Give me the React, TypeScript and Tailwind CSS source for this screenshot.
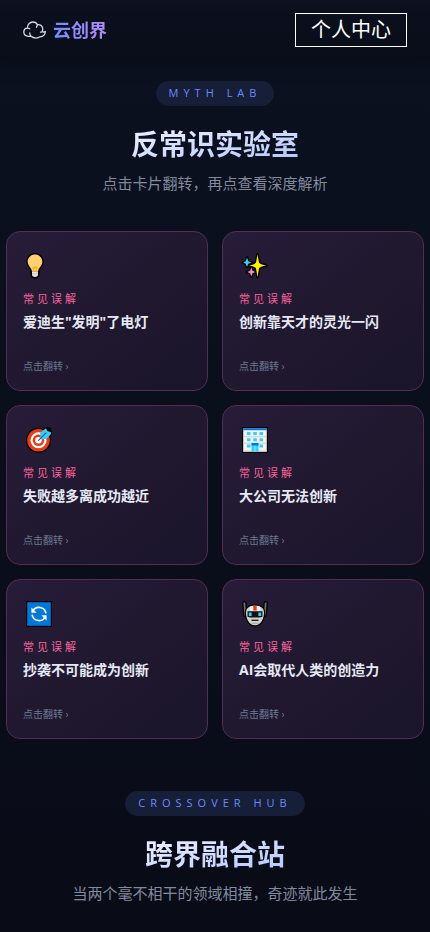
import React, { useState } from 'react'

const BulbIcon = () => (
  <svg viewBox="0 0 26 26" className="size-[26px]" aria-hidden="true">
    <path d="M9 0C4.300 0 .3 3.700.3 8.700c0 3.200 1.800 5 3.200 7.300.9 1.500.7 3 .9 5.300.2 2.900 1.800 4.400 4.600 4.400s4.400-1.500 4.600-4.400c.2-2.300 0-3.800.9-5.300 1.400-2.300 3.200-4.100 3.200-7.300C17.700 3.700 13.700 0 9 0Z" fill="#000" />
    <path d="M9 1.400C4.800 1.400 1.600 4.700 1.600 8.700c0 3.100 2.200 4.700 3.500 7.100.4.800.7 1.600.8 2.700h6.200c.1-1.100.4-1.900.8-2.700 1.300-2.400 3.500-4 3.500-7.100 0-4-3.200-7.300-7.400-7.300Z" fill="#ffd071" />
    <path d="M6.500 14.500h5M7.500 14v4.500M10.500 14v4.500" fill="none" stroke="#fcb017" strokeWidth="1.300" />
    <path d="M6 18.500h6v3c0 1.600-1 2.500-3 2.500s-3-.9-3-2.500Z" fill="#e6e6e6" />
    <path d="M6 20.800h6" stroke="#b5b5b5" strokeWidth=".7" />
  </svg>
)

const SparklesIcon = () => (
  <svg viewBox="0 0 26 26" className="size-[26px]" aria-hidden="true">
    <g stroke="#000" strokeWidth="2.800" strokeLinejoin="round">
      <path d="M15.500 1.500 17 9.500Q18 11.500 24.500 12.500 18 13.500 17 15.500L15.500 24 14 15.500Q13 13.500 7 12.500 13 11.500 14 9.500Z" fill="#fff100" />
      <path d="m5 4.500 1.300 3.700L9.500 9.500 6.300 10.800 5 14l-1.300-3.200L1.200 9.500l2.500-1.300Z" fill="#31d2f7" />
      <path d="m9.300 14.500 1.200 3.300 3 1.200-3 1.200-1.200 3.300L8.100 20.200l-3-1.200 3-1.200Z" fill="#ef8fc5" />
    </g>
    <path d="m5 4.500 1.300 3.700L9.500 9.500 6.300 10.800 5 14l-1.300-3.200L1.200 9.500l2.500-1.300Z" fill="#31d2f7" />
    <path d="m9.300 14.500 1.200 3.300 3 1.200-3 1.200-1.200 3.300L8.100 20.200l-3-1.200 3-1.200Z" fill="#ef8fc5" />
    <path d="M15.500 1.500 17 9.500Q18 11.500 24.500 12.500 18 13.500 17 15.500L15.500 24 14 15.500Q13 13.500 7 12.500 13 11.500 14 9.500Z" fill="#fff100" />
  </svg>
)

const TargetIcon = () => (
  <svg viewBox="0 0 26 26" className="size-[26px]" aria-hidden="true">
    <circle cx="12.500" cy="13.300" r="12.500" fill="#000" />
    <path d="M14 9V4l6-4 5 1 1 6-4 5-7 1Z" fill="#000" />
    <circle cx="12.500" cy="13.300" r="11.300" fill="#e83b16" />
    <circle cx="12.500" cy="13.300" r="8" fill="#fff" />
    <circle cx="12.500" cy="13.300" r="5.800" fill="#e83b16" />
    <circle cx="12.500" cy="13.300" r="3.300" fill="#fff" />
    <path d="m14.500 11-.5-5L20 1.200l1.500 3L24.800 5 25 7l-4.500 5-5 .5Z" fill="#39cdf5" />
    <path d="m12.500 13.300 7.500-7.500" stroke="#0063b1" strokeWidth="1.200" strokeLinecap="round" />
  </svg>
)

const BuildingIcon = () => (
  <svg viewBox="0 0 26 26" className="size-[26px]" aria-hidden="true">
    <path d="M0 0h26v26H0Z" fill="#000" />
    <path d="M1.200 1.200h23.600v23.600H1.200Z" fill="#f2f2f2" />
    <path d="M1.200 1.200h23.600v2H1.200Z" fill="#0078d7" />
    <path d="M1.200 9.700h23.600M1.200 16.200h23.600M1.200 24h23.600" stroke="#cfcfcf" strokeWidth="1" />
    <path d="M5 5h3.500v3H5ZM11.300 5h3.500v3h-3.500ZM17.500 5H21v3h-3.500ZM5 11.300h3.500v3H5ZM11.300 11.300h3.500v3h-3.500ZM17.500 11.300H21v3h-3.500ZM5 17.500h3.500v3H5ZM17.500 17.500H21v3h-3.500Z" fill="#31d2f7" />
    <path d="M9.500 16.500h7v8.300h-7Z" fill="#31d2f7" />
    <path d="M9.500 16h7v2.500h-7Z" fill="#0078d7" />
    <path d="M13 18.500v6.300" stroke="#8debff" strokeWidth="1" />
  </svg>
)

const RefreshIcon = () => (
  <svg viewBox="0 0 26 26" className="size-[26px]" aria-hidden="true">
    <path d="M0 0h26v26H0Z" fill="#000" />
    <path d="M1.200 1.200h23.600v23.600H1.200Z" fill="#0078d7" />
    <path d="M6.600 10.500a7 7 0 0 1 13.300 1.800M19.400 15.500a7 7 0 0 1-13.300-1.800" fill="none" stroke="#fff" strokeWidth="1.600" />
    <path d="M5.400 6.500v5.300h5.300ZM20.600 19.500v-5.300h-5.300Z" fill="#fff" />
  </svg>
)

const RobotIcon = () => (
  <svg viewBox="0 0 26 26" className="size-[26px]" aria-hidden="true">
    <path d="M2.300 2.200 3.300 14M23.700 2.200 22.700 14" stroke="#000" strokeWidth="4.400" strokeLinecap="round" />
    <path d="M2.300 2.200 3.300 14M23.700 2.200 22.700 14" stroke="#6d6d6d" strokeWidth="1.800" strokeLinecap="round" />
    <path d="M13 3.500C6.500 3.500 2.800 6.500 2.800 11.500c0 7.500 3.700 14 10.200 14s10.200-6.500 10.200-14c0-5-3.700-8-10.200-8Z" fill="#000" />
    <path d="M13 4.800c-5.800 0-9 2.400-9 6.700 0 6.500 3.200 12.800 9 12.800s9-6.300 9-12.800c0-4.300-3.200-6.700-9-6.700Z" fill="#d2d2d2" />
    <path d="M13 4.800c-2 0-3.600.3-5 .8v4h10v-4c-1.400-.5-3-.8-5-.8Z" fill="#f2f2f2" />
    <path d="M11.300 4.800h3.400v4.700h-3.400Z" fill="#e83b16" />
    <path d="M5.500 10.300h15v5.400l-3 .8h-9l-3-.8Z" fill="#111" />
    <path d="M6.800 11.500h2.800v3.500H6.800ZM16.400 11.500h2.800v3.500h-2.800Z" fill="#31d2f7" />
    <path d="M9.500 19.300h7" stroke="#222" strokeWidth="1.400" />
    <path d="M9.500 22.300h7" stroke="#999" strokeWidth=".8" />
  </svg>
)

const myths = [
  { title: '爱迪生"发明"了电灯', Icon: BulbIcon },
  { title: '创新靠天才的灵光一闪', Icon: SparklesIcon },
  { title: '失败越多离成功越近', Icon: TargetIcon },
  { title: '大公司无法创新', Icon: BuildingIcon },
  { title: '抄袭不可能成为创新', Icon: RefreshIcon },
  { title: 'AI会取代人类的创造力', Icon: RobotIcon },
]

type HeadingProps = {
  tag: string
  title: string
  subtitle: string
}

const SectionHeading = ({ tag, title, subtitle }: HeadingProps) => (
  <div className="flex flex-col items-center text-center">
    <span className="rounded-full bg-[#161e38] px-[13px] pb-[2px] text-[11px] leading-[23px] tracking-[5px] text-[#6a8bff]">{tag}</span>
    <h2 className="mt-5 bg-linear-to-br from-[#f0f2ff] to-[#b4c6ff] bg-clip-text text-[28px] leading-9 font-bold text-transparent">{title}</h2>
    <p className="mt-[9px] text-[15px] leading-6 text-[#828a9d]">{subtitle}</p>
  </div>
)

const MythCard = ({ title, Icon }: (typeof myths)[number]) => {
  const [flipped, setFlipped] = useState(false)

  return (
    <button
      type="button"
      aria-pressed={flipped}
      onClick={() => setFlipped(!flipped)}
      className="flex h-40 flex-col items-start rounded-[14px] border border-[#582c50] bg-linear-to-br from-[#271c39] via-[#20182f] to-[#1a152b] px-4 pt-[21px] pb-4 text-left"
    >
      <span className="pl-[3px]"><Icon /></span>
      <span className="mt-3 text-[11px] leading-4 tracking-[3px] text-[#f8649c]">常见误解</span>
      <span className="mt-[5px] text-sm leading-5 font-bold text-[#e6e9f5]">{title}</span>
      <span className="mt-auto text-[10px] leading-4 text-[#6b7a92]">点击翻转 ›</span>
    </button>
  )
}

const App = () => {
  return (
    <div className="min-h-screen bg-linear-to-b from-[#0b1120] to-[#090c17] font-['Open_Sans','Noto_Sans_CJK_SC',sans-serif]">
      <header className="flex h-[60px] items-center justify-between bg-linear-to-b from-[#0c101f] to-[#090d18] px-[23px] shadow-[0_4px_12px_#090d18]">
        <a href="#" className="flex items-center gap-[6px]">
          <svg viewBox="0 0 24 18" className="h-[18px] w-6" fill="none" stroke="#d5d8e0" strokeWidth="1.300" strokeLinecap="round" strokeLinejoin="round" aria-hidden="true">
            <path d="M4.300 7.200C4.300 3.500 6.800 1 9.800 1c2.300 0 3.900 1.200 4.600 2.800 2.500-.5 5 .9 5.300 3.600.1 1.200-.1 2.300-.6 3.300 1.300.5 2.400.3 3.300-.2-.3 3.400-2.700 5.200-5.400 5.300-1 .9-2.400 1.300-4 1.300-2.300 0-4-.8-5.300-2C4.200 15.800.8 14.500.8 11.300c0-2.300 1.400-4 3.500-4.100ZM4.300 7.200c.9-.1 1.700.1 2.400.6M14.400 3.800l-.9 2.500M6.800 12c0 1.300.3 2.200.9 3.100M19.100 10.700c-.5.300-1 .5-1.600.5" />
          </svg>
          <span className="bg-linear-to-r from-[#6f8cff] to-[#b18cf8] bg-clip-text text-lg leading-7 font-bold text-transparent">云创界</span>
        </a>
        <button type="button" className="h-[34px] border border-white px-[15px] text-xl leading-8 text-white">个人中心</button>
      </header>

      <main>
        <section className="px-[6px] pt-[21px]">
          <SectionHeading tag="MYTH LAB" title="反常识实验室" subtitle="点击卡片翻转，再点查看深度解析" />
          <div className="mt-9 grid grid-cols-2 gap-[14px]">
            {myths.map((myth) => (
              <MythCard key={myth.title} {...myth} />
            ))}
          </div>
        </section>

        <section className="px-[6px] pt-[52px] pb-6">
          <SectionHeading tag="CROSSOVER HUB" title="跨界融合站" subtitle="当两个毫不相干的领域相撞，奇迹就此发生" />
        </section>
      </main>
    </div>
  )
}

export default App
